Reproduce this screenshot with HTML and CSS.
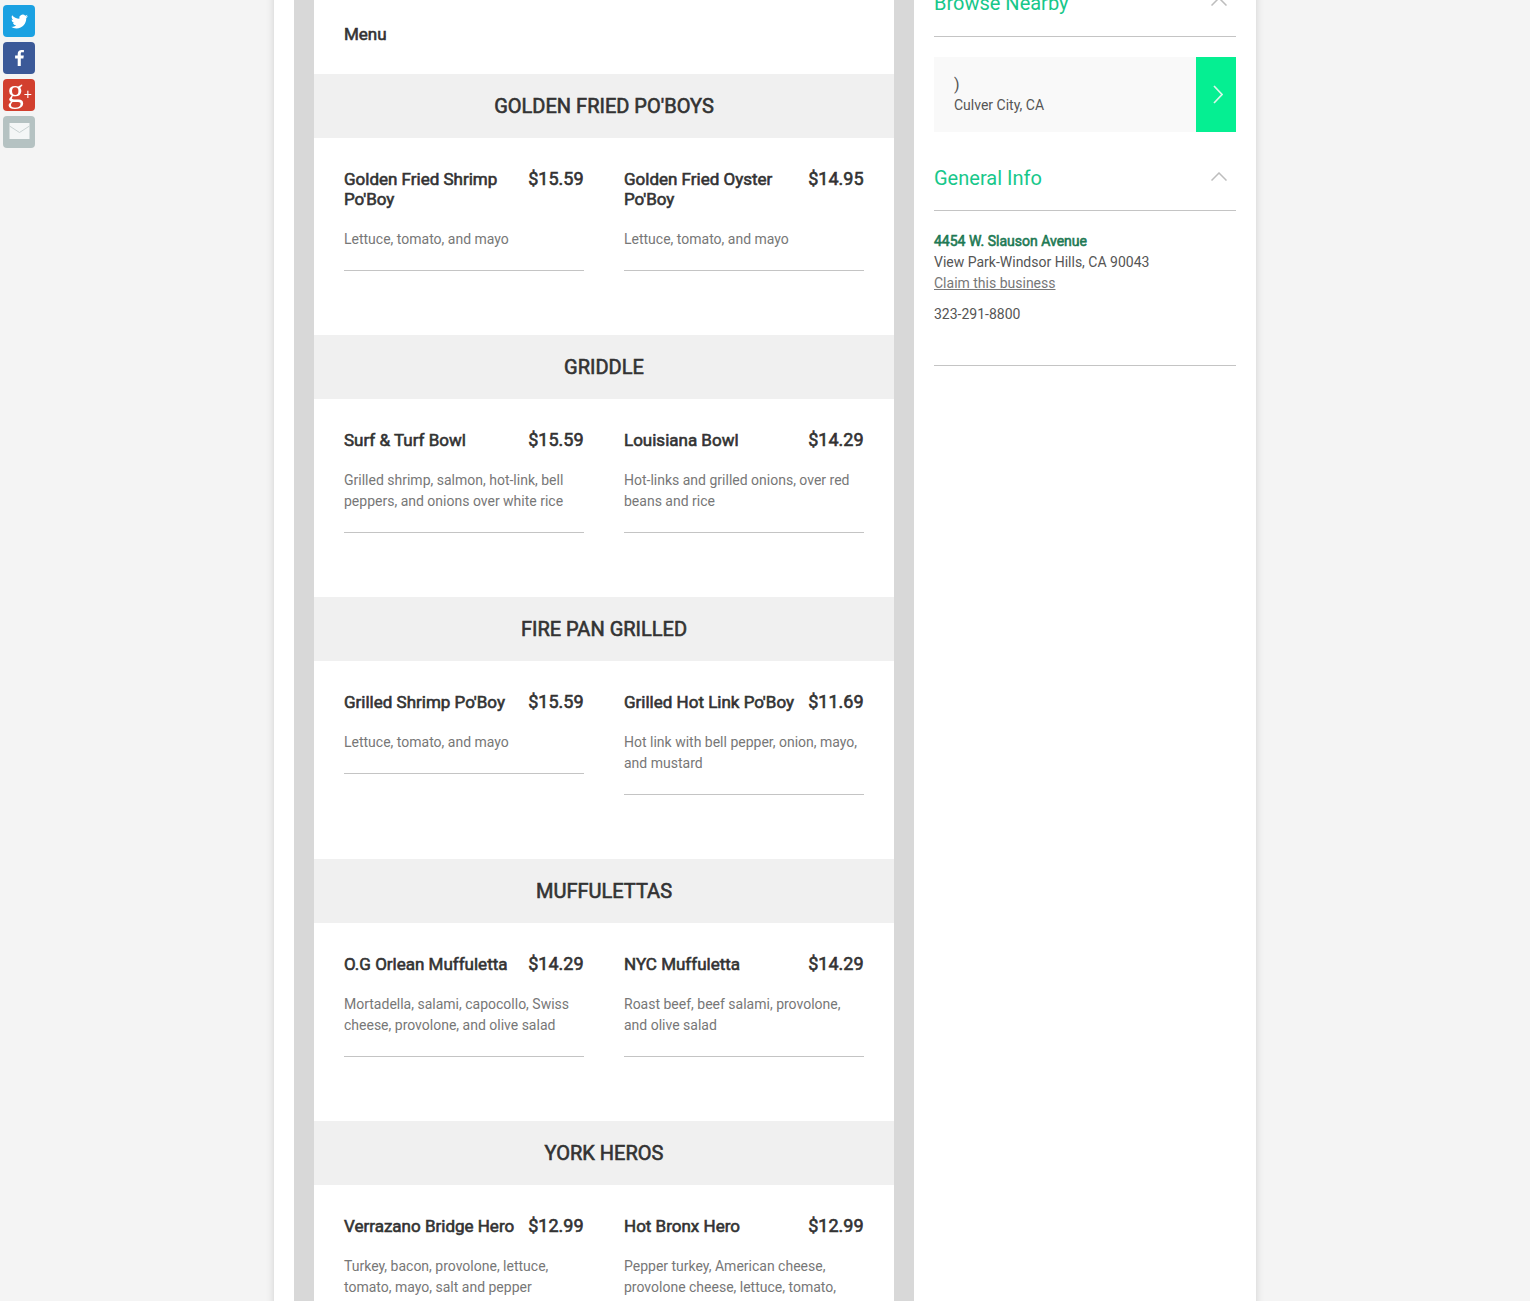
FILE: index.html
```html
<!DOCTYPE html>
<html lang="en">
<head>
    <meta charset="UTF-8">
    <meta name="viewport" content="width=device-width, initial-scale=1.0">
    <title>Restaurant Menu</title>
    <link rel="stylesheet" href="styles.css">
</head>
<body>
    <!-- share buttons stay fixed on the left -->
    <div class="share">
        <a class="share-btn twitter" href="#">
            <svg viewBox="0 0 24 24" width="17" height="17"><path fill="#fff" d="M23.953 4.57a10 10 0 01-2.825.775 4.958 4.958 0 002.163-2.723c-.951.555-2.005.959-3.127 1.184a4.92 4.92 0 00-8.384 4.482C7.69 8.095 4.067 6.13 1.64 3.162a4.822 4.822 0 00-.666 2.475c0 1.71.87 3.213 2.188 4.096a4.904 4.904 0 01-2.228-.616v.06a4.923 4.923 0 003.946 4.827 4.996 4.996 0 01-2.212.085 4.936 4.936 0 004.604 3.417 9.867 9.867 0 01-6.102 2.105c-.39 0-.779-.023-1.17-.067a13.995 13.995 0 007.557 2.209c9.053 0 13.998-7.496 13.998-13.985 0-.21 0-.42-.015-.63A9.935 9.935 0 0024 4.59z"/></svg>
        </a>
        <a class="share-btn facebook" href="#">
            <svg viewBox="0 0 32 32" width="32" height="32"><path fill="#fff" d="M17.800 24v-7.500h2.600l.4-3h-3v-1.900c0-.9.300-1.400 1.500-1.400h1.600V8c-.300 0-1.200-.1-2.300-.1-2.300 0-3.900 1.400-3.900 4v1.600h-2.600v3h2.600V24z"/></svg>
        </a>
        <a class="share-btn google" href="#"><span class="g-letter">g</span><span class="g-plus">+</span></a>
        <a class="share-btn email" href="#">
            <svg viewBox="0 0 32 32" width="32" height="32">
                <rect fill="#f4f6f6" x="6.500" y="7" width="20" height="16"/>
                <path fill="none" stroke="#c9d2d2" d="M6.500 10l10 6.500 10-6.500"/>
            </svg>
        </a>
    </div>

    <div class="page">
        <div class="main-col">
            <div class="menu">
                <h3 class="menu-title">Menu</h3>

                <section class="menu-section">
                    <h2 class="section-title">GOLDEN FRIED PO'BOYS</h2>
                    <div class="items">
                        <div class="item">
                            <div class="item-head"><h4 class="item-name">Golden Fried Shrimp Po'Boy</h4><span class="item-price">$15.59</span></div>
                            <p class="item-desc">Lettuce, tomato, and mayo</p>
                        </div>
                        <div class="item">
                            <div class="item-head"><h4 class="item-name">Golden Fried Oyster Po'Boy</h4><span class="item-price">$14.95</span></div>
                            <p class="item-desc">Lettuce, tomato, and mayo</p>
                        </div>
                    </div>
                </section>

                <section class="menu-section">
                    <h2 class="section-title">GRIDDLE</h2>
                    <div class="items">
                        <div class="item">
                            <div class="item-head"><h4 class="item-name">Surf &amp; Turf Bowl</h4><span class="item-price">$15.59</span></div>
                            <p class="item-desc">Grilled shrimp, salmon, hot-link, bell peppers, and onions over white rice</p>
                        </div>
                        <div class="item">
                            <div class="item-head"><h4 class="item-name">Louisiana Bowl</h4><span class="item-price">$14.29</span></div>
                            <p class="item-desc">Hot-links and grilled onions, over red beans and rice</p>
                        </div>
                    </div>
                </section>

                <section class="menu-section">
                    <h2 class="section-title">FIRE PAN GRILLED</h2>
                    <div class="items">
                        <div class="item">
                            <div class="item-head"><h4 class="item-name">Grilled Shrimp Po'Boy</h4><span class="item-price">$15.59</span></div>
                            <p class="item-desc">Lettuce, tomato, and mayo</p>
                        </div>
                        <div class="item">
                            <div class="item-head"><h4 class="item-name">Grilled Hot Link Po'Boy</h4><span class="item-price">$11.69</span></div>
                            <p class="item-desc">Hot link with bell pepper, onion, mayo, and mustard</p>
                        </div>
                    </div>
                </section>

                <section class="menu-section">
                    <h2 class="section-title">MUFFULETTAS</h2>
                    <div class="items">
                        <div class="item">
                            <div class="item-head"><h4 class="item-name">O.G Orlean Muffuletta</h4><span class="item-price">$14.29</span></div>
                            <p class="item-desc">Mortadella, salami, capocollo, Swiss cheese, provolone, and olive salad</p>
                        </div>
                        <div class="item">
                            <div class="item-head"><h4 class="item-name">NYC Muffuletta</h4><span class="item-price">$14.29</span></div>
                            <p class="item-desc">Roast beef, beef salami, provolone, and olive salad</p>
                        </div>
                    </div>
                </section>

                <section class="menu-section">
                    <h2 class="section-title">YORK HEROS</h2>
                    <div class="items">
                        <div class="item">
                            <div class="item-head"><h4 class="item-name">Verrazano Bridge Hero</h4><span class="item-price">$12.99</span></div>
                            <p class="item-desc">Turkey, bacon, provolone, lettuce, tomato, mayo, salt and pepper</p>
                        </div>
                        <div class="item">
                            <div class="item-head"><h4 class="item-name">Hot Bronx Hero</h4><span class="item-price">$12.99</span></div>
                            <p class="item-desc">Pepper turkey, American cheese, provolone cheese, lettuce, tomato, pepperoncini, and mayo</p>
                        </div>
                    </div>
                </section>
            </div>
        </div>

        <aside class="sidebar">
            <div class="side-head">
                <h3 class="side-title">Browse Nearby</h3>
                <svg class="chevron-up" viewBox="0 0 16 9" width="16" height="9"><path fill="none" stroke="#bdbdbd" stroke-width="1.500" d="M.5 8.500l7.500-7.500 7.500 7.500"/></svg>
            </div>
            <a class="nearby" href="#">
                <div class="nearby-text">
                    <div class="nearby-name">)</div>
                    <div class="nearby-city">Culver City, CA</div>
                </div>
                <div class="nearby-arrow">
                    <svg viewBox="0 0 10 19" width="10" height="19"><path fill="none" stroke="#d9f7e8" stroke-width="1.700" d="M1 1l8 8.500-8 8.500"/></svg>
                </div>
            </a>

            <div class="side-head">
                <h3 class="side-title">General Info</h3>
                <svg class="chevron-up" viewBox="0 0 16 9" width="16" height="9"><path fill="none" stroke="#bdbdbd" stroke-width="1.500" d="M.5 8.500l7.500-7.500 7.500 7.500"/></svg>
            </div>
            <div class="info">
                <div class="info-street">4454 W. Slauson Avenue</div>
                <div>View Park-Windsor Hills, CA 90043</div>
                <a class="info-claim" href="#">Claim this business</a>
                <div class="info-phone">323-291-8800</div>
            </div>
        </aside>
    </div>
</body>
</html>
```

FILE: styles.css
```css
html, body {
    height: 1301px;
    overflow: hidden;
}

body {
    margin: 0;
    background-color: #f4f4f4;
    font-family: Roboto, "Liberation Sans", sans-serif;
    color: #333;
}

/* share buttons */
.share {
    position: fixed;
    top: 5px;
    left: 3px;
    display: flex;
    flex-direction: column;
    gap: 5px;
}

.share-btn {
    width: 32px;
    height: 32px;
    border-radius: 4px;
    display: flex;
    align-items: center;
    justify-content: center;
    text-decoration: none;
    color: #fff;
    overflow: hidden;
}

.twitter { background-color: #1ba1e2; }
.facebook { background-color: #3b5998; }
.google { background-color: #d23f2e; }
.email { background-color: #b5c2c2; }

.g-letter {
    font-family: "Liberation Serif", serif;
    font-size: 33px;
    line-height: 32px;
    margin: -9px 0 0 1px;
}

.g-plus {
    font-family: "Liberation Sans", sans-serif;
    font-size: 14px;
    line-height: 32px;
    margin-top: -3px;
}

/* page frame, scrolled a little down */
.page {
    width: 982px;
    margin: -20px 0 0 274px;
    display: flex;
    background-color: #fff;
    box-shadow: 0 0 8px rgba(0, 0, 0, 0.15);
    padding-left: 20px;
    box-sizing: border-box;
}

.main-col {
    width: 620px;
    padding: 0 20px;
    box-sizing: border-box;
    background-color: #d8d8d8;
}

.menu {
    background-color: #fff;
}

/* the heavy text is regular Roboto thickened a little */
.menu-title,
.section-title,
.item-name,
.item-price,
.info-street {
    font-weight: 400;
    -webkit-text-stroke: 0.6px currentColor;
}

.menu-title {
    margin: 0;
    padding: 42px 30px 0;
    height: 52px;
    font-size: 17px;
    line-height: 24px;
    color: #333;
}

.menu-section {
    padding-bottom: 64px;
}

.section-title {
    margin: 0;
    height: 64px;
    line-height: 64px;
    background-color: #f0f0f0;
    text-align: center;
    font-size: 20px;
    color: #333;
}

.items {
    display: grid;
    grid-template-columns: 240px 240px;
    gap: 40px;
    padding: 31px 30px 0;
    align-items: start;
}

.item {
    border-bottom: 1px solid #c4c4c4;
    padding-bottom: 20px;
}

.item-head {
    display: flex;
    justify-content: space-between;
    gap: 10px;
}

.item-name {
    margin: 0;
    font-size: 17px;
    line-height: 20px;
    color: #333;
}

.item-price {
    font-size: 18px;
    line-height: 20px;
    color: #333;
    flex: none;
    margin-right: 0.5px;
}

.item-desc {
    margin: 20px 0 0;
    font-size: 14px;
    line-height: 21px;
    color: #777;
}

/* right column */
.sidebar {
    width: 342px;
    margin-left: auto;
    padding: 11px 20px 0;
    box-sizing: border-box;
}

.side-head {
    position: relative;
    border-bottom: 1px solid #c4c4c4;
    padding-bottom: 20px;
}

.side-head:first-child {
    padding-bottom: 21px;
}

.side-title {
    margin: 0;
    font-size: 20px;
    line-height: 24px;
    font-weight: 400;
    color: #17c78a;
}

.chevron-up {
    position: absolute;
    top: 6px;
    right: 9px;
}

.nearby {
    display: flex;
    height: 75px;
    margin: 20px 0 34px;
    background-color: #f9f9f9;
    text-decoration: none;
}

.nearby-text {
    flex: 1;
    padding: 17px 20px 0;
    color: #555;
    font-size: 14px;
    line-height: 21px;
}

.nearby-name {
    font-size: 16px;
}

.nearby-arrow {
    width: 40px;
    padding-left: 3px;
    box-sizing: border-box;
    background-color: #05ef92;
    display: flex;
    align-items: center;
    justify-content: center;
}

.info {
    padding: 20px 0 40px;
    border-bottom: 1px solid #c4c4c4;
    font-size: 14px;
    line-height: 21px;
    color: #555;
}

.info-street {
    color: #1f7a55;
}

.info-claim {
    display: block;
    color: #777;
    text-decoration: underline;
}

.info-phone {
    margin-top: 10px;
}
```
